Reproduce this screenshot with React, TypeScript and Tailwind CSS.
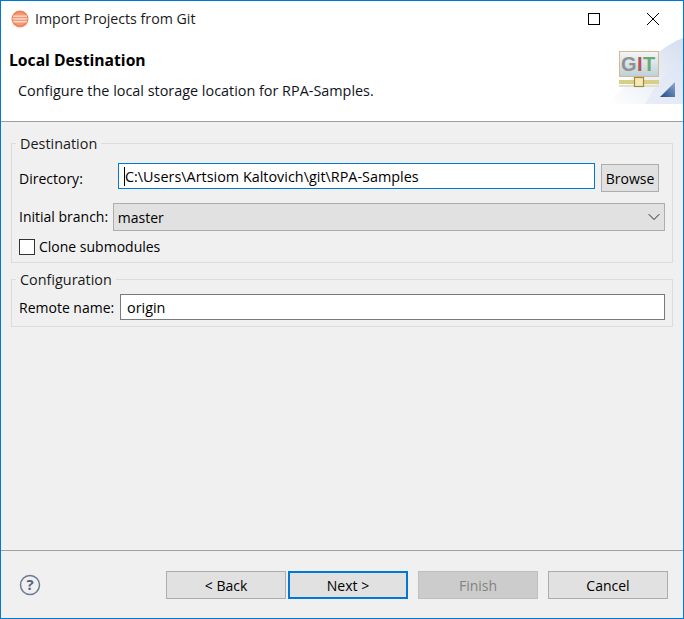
import { ChevronDown } from 'lucide-react'

// ── Bits ──────────────────────────────────────────────────────────────────────

function EclipseIcon() {
  return (
    <svg width="18" height="18" viewBox="0 0 18 18" className="shrink-0">
      <circle cx="9" cy="9" r="8.5" fill="#f0855a" />
      <circle cx="9" cy="9" r="6.5" fill="#f29a78" />
      <rect x="2" y="5.5" width="14" height="1.3" fill="#fff" opacity="0.7" />
      <rect x="1.5" y="8.3" width="15" height="1.3" fill="#fff" opacity="0.7" />
      <rect x="2" y="11.1" width="14" height="1.3" fill="#fff" opacity="0.7" />
    </svg>
  )
}

function GitBanner() {
  return (
    <svg width="76" height="66" viewBox="0 0 76 66" className="shrink-0">
      <defs>
        <linearGradient id="swoosh" x1="0" y1="1" x2="1" y2="0">
          <stop offset="0" stopColor="#ffffff" />
          <stop offset="1" stopColor="#d5deef" />
        </linearGradient>
        <linearGradient id="screen" x1="0" y1="0" x2="0" y2="1">
          <stop offset="0" stopColor="#f4f6f6" />
          <stop offset="1" stopColor="#bfd0d6" />
        </linearGradient>
        <linearGradient id="corner" x1="0" y1="1" x2="1" y2="0">
          <stop offset="0" stopColor="#214a88" />
          <stop offset="1" stopColor="#8fa9d2" />
        </linearGradient>
      </defs>
      <path d="M0 66 C20 50 40 14 76 0 V66 Z" fill="url(#swoosh)" />
      <path d="M38 66 C50 46 60 30 76 24 V66 Z" fill="#dfe6f5" opacity="0.6" />
      <rect x="12.5" y="13.5" width="39" height="25" fill="url(#screen)" stroke="#d8b98e" />
      <text x="14" y="33" fontSize="20" fontWeight="700" fontFamily="'Liberation Sans', sans-serif" fill="#8f9294">G</text>
      <text x="30" y="33" fontSize="20" fontWeight="700" fontFamily="'Liberation Sans', sans-serif" fill="#b5525a">I</text>
      <text x="36" y="33" fontSize="20" fontWeight="700" fontFamily="'Liberation Sans', sans-serif" fill="#6fa878">T</text>
      <rect x="12" y="42" width="40" height="4" fill="#d8cf86" />
      <rect x="12" y="47" width="40" height="2" fill="#e5dfc6" />
      <rect x="27.5" y="39.5" width="9" height="9" fill="#f8e8b4" stroke="#9d8c43" strokeWidth="1.2" />
      <path d="M53 59 L68 44 V59 Z" fill="url(#corner)" />
    </svg>
  )
}

function Group({ title, className, children }: { title: string; className: string; children: React.ReactNode }) {
  return (
    <div className={`border border-[#dcdcdc] ${className}`}>
      <div className="-ml-[3px] -mt-[10px] w-fit bg-[#f0f0f0] px-[4px] text-[14.4px] leading-[20px] text-[#1a1a1a]">{title}</div>
      {children}
    </div>
  )
}

function WizardButton({ label, kind }: { label: string; kind?: 'default' | 'disabled' }) {
  const look =
    kind === 'default'
      ? 'border-2 border-[#0078d7] bg-[#e1e1e1] text-black'
      : kind === 'disabled'
        ? 'border border-[#bfbfbf] bg-[#cccccc] text-[#838383]'
        : 'border border-[#adadad] bg-[#e1e1e1] text-black'
  return (
    <button className={`flex h-[28px] w-[120px] items-center justify-center ${look}`}>{label}</button>
  )
}

// ── Main screen ───────────────────────────────────────────────────────────────

export default function App() {
  return (
    <div
      className="flex h-[619px] w-[684px] flex-col border border-[#0078d7] bg-[#f0f0f0] text-[14px] text-black"
      style={{ fontFamily: "'Open Sans', sans-serif" }}
    >
      {/* Title bar */}
      <div className="flex h-[35px] shrink-0 items-center bg-white pl-[10px]">
        <EclipseIcon />
        <span className="ml-[6px] text-[14.2px] text-[#1a1a1a]">Import Projects from Git</span>
        <div className="ml-auto flex items-center">
          <div className="mr-[47px] h-[12px] w-[12px] border border-black" />
          <svg width="12" height="12" viewBox="0 0 12 12" className="mr-[24px]">
            <path d="M0 0 L12 12 M12 0 L0 12" stroke="#000" strokeWidth="1" fill="none" />
          </svg>
        </div>
      </div>

      {/* Banner */}
      <div className="flex h-[86px] shrink-0 justify-between border-b border-[#a0a0a0] bg-white">
        <div className="pl-[8px] pt-[14px]">
          <div className="text-[15.7px] font-bold leading-[20px]">Local Destination</div>
          <div className="pl-[9px] pt-[11px] text-[14.4px] leading-[20px] text-[#10131a]">
            Configure the local storage location for RPA-Samples.
          </div>
        </div>
        <div className="mt-[2px]">
          <GitBanner />
        </div>
      </div>

      {/* Body */}
      <div className="flex flex-1 flex-col border-b border-[#a0a0a0] px-[10px] pt-[21px]">
        <Group title="Destination" className="h-[120px] pl-[7px] pr-[7px]">
          <div className="mt-[9px] flex items-start">
            <span className="w-[99px] pt-[6px] leading-[20px]">Directory:</span>
            <div className="flex h-[26px] w-[477px] items-center border border-[#0078d7] bg-white pl-[5px]">
              <span className="border-l border-black pt-[1px] text-[14.4px] leading-[18px]">C:\Users\Artsiom Kaltovich\git\RPA-Samples</span>
            </div>
            <button className="ml-[6px] mt-[1px] h-[28px] w-[58px] border border-[#adadad] bg-[#e1e1e1]">Browse</button>
          </div>
          <div className="mt-[11px] flex items-center">
            <span className="w-[94px] leading-[20px]">Initial branch:</span>
            <div className="flex h-[28px] w-[553px] items-center justify-between border border-[#adadad] bg-[#e1e1e1] pl-[4px]">
              <span>master</span>
              <ChevronDown size={20} strokeWidth={1} />
            </div>
          </div>
          <label className="mt-[7px] flex items-center">
            <span className="h-[16px] w-[16px] border border-[#333] bg-white" />
            <span className="ml-[4px] pt-[1px] leading-[16px]">Clone submodules</span>
          </label>
        </Group>

        <Group title="Configuration" className="mt-[16px] h-[48px] pl-[7px] pr-[7px]">
          <div className="mt-[4px] flex items-center">
            <span className="w-[101px] pt-[1px] leading-[20px]">Remote name:</span>
            <div className="flex h-[26px] w-[545px] items-center border border-[#7a7a7a] bg-white pl-[6px] pt-[1px] text-[14.4px]">origin</div>
          </div>
        </Group>
      </div>

      {/* Footer */}
      <div className="flex h-[67px] shrink-0 items-start pl-[18px] pt-[20px]">
        <svg width="22" height="22" viewBox="0 0 22 22" className="mt-[3px]">
          <circle cx="11" cy="11" r="9.5" fill="none" stroke="#6c7a95" strokeWidth="1.5" />
          <text x="11" y="16" textAnchor="middle" fontSize="15" fontWeight="700" fontFamily="'Open Sans', sans-serif" fill="#56627f">?</text>
        </svg>
        <div className="ml-auto mr-[15px] flex items-center">
          <WizardButton label="< Back" />
          <div className="ml-[2px]"><WizardButton label="Next >" kind="default" /></div>
          <div className="ml-[10px]"><WizardButton label="Finish" kind="disabled" /></div>
          <div className="ml-[10px]"><WizardButton label="Cancel" /></div>
        </div>
      </div>
    </div>
  )
}
